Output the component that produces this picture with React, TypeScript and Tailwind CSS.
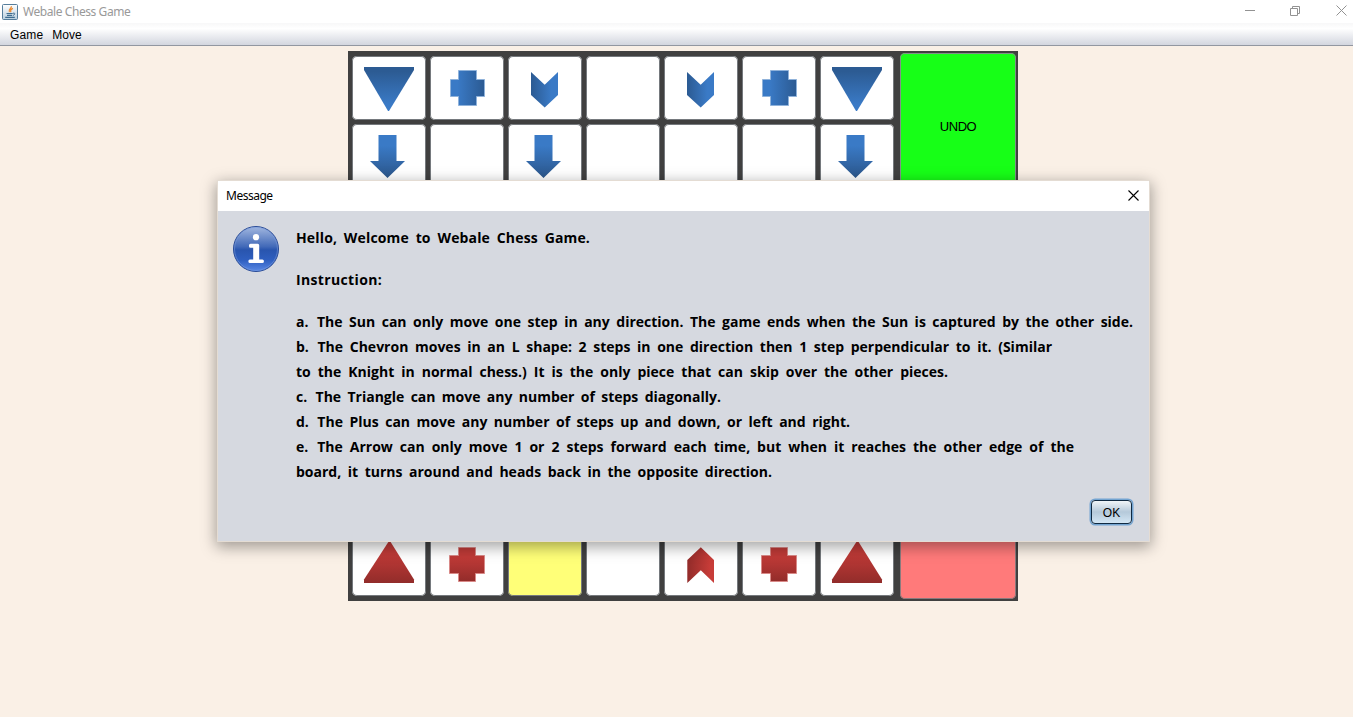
import React from "react";

type Kind = "triDown" | "plusBlue" | "chevDown" | "arrow" | "triUp" | "plusRed" | "chevUp" | "";

const shapes: Record<string, { points: string; fill: string; edge?: string }> = {
  triDown: { points: "12,11 62,11 62,14 37,55 36,55 12,14", fill: "url(#blueV)" },
  plusBlue: {
    points: "28.5,14.5 46.5,14.5 46.5,23.5 54.5,23.5 54.5,40.5 46.5,40.5 46.5,49.5 28.5,49.5 28.5,40.5 20.5,40.5 20.5,23.5 28.5,23.5",
    fill: "url(#blueH)",
    edge: "#8fb2da",
  },
  chevDown: { points: "23,16 36.7,28.8 50,16 50,39 36.7,51.5 23,39", fill: "url(#blueC)" },
  arrow: { points: "26.5,11 44.5,11 44.5,37 53,37 35.5,54 18,37 26.5,37", fill: "url(#blueA)" },
  triUp: { points: "37,9 38,9 62,47.5 62,51 12,51 12,47.5", fill: "url(#redV)" },
  plusRed: {
    points: "28.5,15.5 45.5,15.5 45.5,23.5 54.5,23.5 54.5,41.5 45.5,41.5 45.5,49.5 28.5,49.5 28.5,41.5 19.5,41.5 19.5,23.5 28.5,23.5",
    fill: "url(#redV)",
    edge: "#d98a88",
  },
  chevUp: { points: "23.3,28 36.8,15.3 50,28 50,51 36.8,38.3 23.3,51", fill: "url(#redH)" },
};

const rows: Kind[][] = [
  ["triDown", "plusBlue", "chevDown", "", "chevDown", "plusBlue", "triDown"],
  ["arrow", "", "arrow", "", "", "", "arrow"],
  ["", "", "", "", "", "", ""],
  ["", "", "", "", "", "", ""],
  ["", "", "", "", "", "", ""],
  ["", "", "", "", "", "", ""],
  ["", "", "", "", "", "", ""],
  ["triUp", "plusRed", "", "", "chevUp", "plusRed", "triUp"],
];

function Gradients() {
  return (
    <svg className="absolute h-0 w-0" aria-hidden="true">
      <defs>
        <linearGradient id="blueV" x1="0" y1="0" x2="0" y2="1">
          <stop offset="0.1" stopColor="#2c5b93" />
          <stop offset="0.85" stopColor="#3a7ac6" />
        </linearGradient>
        <linearGradient id="blueH">
          <stop offset="0.2" stopColor="#3a7ac6" />
          <stop offset="1" stopColor="#2b5a92" />
        </linearGradient>
        <linearGradient id="blueC">
          <stop offset="0" stopColor="#2b5a92" />
          <stop offset="0.75" stopColor="#3a7ac6" />
        </linearGradient>
        <linearGradient id="blueA" x1="0" y1="0" x2="0" y2="1">
          <stop offset="0.25" stopColor="#3a7ac6" />
          <stop offset="1" stopColor="#2b568b" />
        </linearGradient>
        <linearGradient id="redV" x1="0" y1="0" x2="0" y2="1">
          <stop offset="0.3" stopColor="#bf3a37" />
          <stop offset="1" stopColor="#922c2a" />
        </linearGradient>
        <linearGradient id="redH">
          <stop offset="0" stopColor="#922c2a" />
          <stop offset="0.85" stopColor="#c73c38" />
        </linearGradient>
      </defs>
    </svg>
  );
}

function Cell({ kind, selected }: { kind: Kind; selected: boolean }) {
  const s = kind ? shapes[kind] : null;
  return (
    <div
      className={
        selected
          ? "h-16 w-[74px] rounded-[5px] bg-[#ffff78] shadow-[inset_0_0_0_1px_#75797d]"
          : "h-16 w-[74px] rounded-[5px] bg-white shadow-[inset_0_0_0_1px_#75797d]"
      }
    >
      {s && (
        <svg width="74" height="64" viewBox="0 0 74 64" className="block">
          <polygon points={s.points} fill={s.fill} stroke={s.edge ?? "none"} strokeWidth={s.edge ? 1 : 0} />
        </svg>
      )}
    </div>
  );
}

function JavaIcon() {
  return (
    <svg width="16" height="16" viewBox="0 0 16 16" className="block">
      <defs>
        <linearGradient id="jv" x1="0" y1="0" x2="0" y2="1">
          <stop offset="0" stopColor="#ffffff" />
          <stop offset="1" stopColor="#b9cfdf" />
        </linearGradient>
      </defs>
      <rect x="0.5" y="0.5" width="15" height="15" rx="1" fill="url(#jv)" stroke="#557d9b" />
      <path d="M9.3 2.3C10 4.5 5.6 5.4 7.4 8.2M10.9 4.4C8.4 5.6 8.2 6.6 9 8.2" fill="none" stroke="#ec8b32" strokeWidth="1.3" />
      <path d="M4.5 9.5h6.2M5 11.3h5.2M3.2 13.3h9.6" fill="none" stroke="#3f6d90" strokeWidth="1.2" />
      <path d="M11 9.2c2.6-.6 2.2 1.6 0 2.2" fill="none" stroke="#3f6d90" />
    </svg>
  );
}

function InfoIcon() {
  return (
    <svg width="48" height="48" viewBox="0 0 48 48" className="block">
      <defs>
        <linearGradient id="info" x1="0" y1="0" x2="0" y2="1">
          <stop offset="0" stopColor="#a3b8e0" />
          <stop offset="0.45" stopColor="#4169b8" />
          <stop offset="0.52" stopColor="#2955ae" />
          <stop offset="0.75" stopColor="#2f5fc0" />
          <stop offset="1" stopColor="#5b8ae6" />
        </linearGradient>
      </defs>
      <circle cx="24" cy="24" r="22.5" fill="url(#info)" stroke="#294b97" />
      <circle cx="24" cy="24" r="21.5" fill="none" stroke="#7d9fe0" strokeOpacity="0.5" />
      <circle cx="24" cy="12.2" r="3.1" fill="#fff" />
      <path
        d="M18.5 18.8h7.2q1.5 0 1.5 1.5v14.2h3.2q1.5 0 1.5 1.5v.6q0 1.5-1.5 1.5H17.9q-1.5 0-1.5-1.5V36q0-1.5 1.5-1.5h3.3v-11.7h-2.7q-1.5 0-1.5-1.5v-1q0-1.5 1.5-1.5z"
        fill="#fff"
      />
    </svg>
  );
}

function Line({ className, children }: { className: string; children: React.ReactNode }) {
  return <p className={"whitespace-nowrap [text-align-last:justify] " + className}>{children}</p>;
}

function Marker({ children }: { children: string }) {
  return <span className="mr-[2px]">{children}</span>;
}

function Dialog() {
  return (
    <div
      role="dialog"
      className="absolute top-[180px] left-[217px] flex h-[362px] w-[933px] flex-col border border-[#e4dcd3] bg-[#d6d9e0] shadow-[0_4px_14px_1px_rgba(0,0,0,0.36)]"
    >
      <div className="flex h-[30px] shrink-0 items-center justify-between bg-white pr-[10px] pl-2">
        <span className="font-['Noto_Sans','Open_Sans',sans-serif] text-[12px] tracking-[-0.5px] text-black">Message</span>
        <svg width="11" height="11" viewBox="0 0 11 11" className="-mt-[2px] block">
          <path d="M0.5 0.5l10 10M10.5 0.5l-10 10" stroke="#000" strokeWidth="1.1" />
        </svg>
      </div>
      <div className="flex pt-[14px] pl-[14px]">
        <InfoIcon />
        <div className="pl-[16px] font-['Comic_Sans_MS','Open_Sans','Noto_Sans',sans-serif] text-[14px] leading-[25px] font-bold text-black">
          <Line className="w-[294px] tracking-[0.15px]">Hello, Welcome to Webale Chess Game.</Line>
          <Line className="mt-[17px] w-[86px] tracking-[0.35px]">Instruction:</Line>
          <div className="mt-[17px]">
            <Line className="w-[837px]">
              <Marker>a.</Marker> The Sun can only move one step in any direction. The game ends when the Sun is captured by the other side.
            </Line>
            <Line className="w-[756px]">
              <Marker>b.</Marker> The Chevron moves in an L shape: 2 steps in one direction then 1 step perpendicular to it. (Similar
            </Line>
            <Line className="w-[652px]">to the Knight in normal chess.) It is the only piece that can skip over the other pieces.</Line>
            <Line className="w-[425px]">
              <Marker>c.</Marker> The Triangle can move any number of steps diagonally.
            </Line>
            <Line className="w-[554px]">
              <Marker>d.</Marker> The Plus can move any number of steps up and down, or left and right.
            </Line>
            <Line className="w-[778px]">
              <Marker>e.</Marker> The Arrow can only move 1 or 2 steps forward each time, but when it reaches the other edge of the
            </Line>
            <Line className="w-[476px]">board, it turns around and heads back in the opposite direction.</Line>
          </div>
        </div>
      </div>
      <div className="mt-auto flex justify-end pr-[17px] pb-[17px]">
        <button className="h-[24px] w-[41px] rounded-[4px] border border-[#102a42] bg-linear-to-b from-[#f0f5f8] via-[#b5c9da] to-[#d3e6f4] pt-[2px] font-['Liberation_Sans',sans-serif] text-[12px] text-black shadow-[0_0_0_1.5px_#73a4d1]">
          OK
        </button>
      </div>
    </div>
  );
}

export default function App() {
  return (
    <div className="relative flex h-[717px] w-[1353px] flex-col overflow-hidden bg-[#faf0e6]">
      <Gradients />
      <header className="flex h-[23px] shrink-0 items-center justify-between bg-white pr-[6px] pl-[2px]">
        <div className="flex items-center gap-[5px]">
          <JavaIcon />
          <span className="pt-px font-['Noto_Sans','Open_Sans',sans-serif] text-[12px] leading-4 tracking-[-0.43px] text-[#999]">
            Webale Chess Game
          </span>
        </div>
        <svg width="103" height="12" viewBox="0 0 103 12" className="-mt-[2px] block" fill="none" stroke="#929292">
          <path d="M1 5.5h10M46.5 3.5h7v7h-7zM48.5 3.5v-2h7v7h-2M92.5 0.5l10 10M102.5 0.5l-10 10" />
        </svg>
      </header>
      <nav className="flex h-[23px] shrink-0 items-center gap-[9px] border-b border-[#9297a1] bg-linear-to-b from-[#f7f7f8] via-white via-25% to-[#d3d6df] pt-[2px] pl-[10px] font-['Liberation_Sans',sans-serif] text-[12px] text-black">
        <span className="tracking-[0.15px]">Game</span>
        <span>Move</span>
      </nav>
      <main className="mt-[5px] ml-[348px] flex h-[550px] w-[670px] bg-[#404040]">
        <div className="grid grid-cols-[repeat(7,74px)] content-start gap-1 pt-[5px] pl-1">
          {rows.map((row, r) => row.map((kind, c) => <Cell key={`${r}-${c}`} kind={kind} selected={r === 7 && c === 2} />))}
        </div>
        <div className="ml-[6px] flex w-[116px] flex-col justify-between pt-[2px] pb-[2px]">
          <div className="flex h-[147px] items-center justify-center rounded-[5px] bg-[#17ff17] font-['Liberation_Sans',sans-serif] text-[13px] tracking-[-0.5px] text-black shadow-[inset_0_0_0_1px_#83908a]">
            UNDO
          </div>
          <div className="h-[147px] rounded-[5px] bg-[#ff7a7a] shadow-[inset_0_0_0_1px_#8b7a7d]" />
        </div>
      </main>
      <Dialog />
    </div>
  );
}
